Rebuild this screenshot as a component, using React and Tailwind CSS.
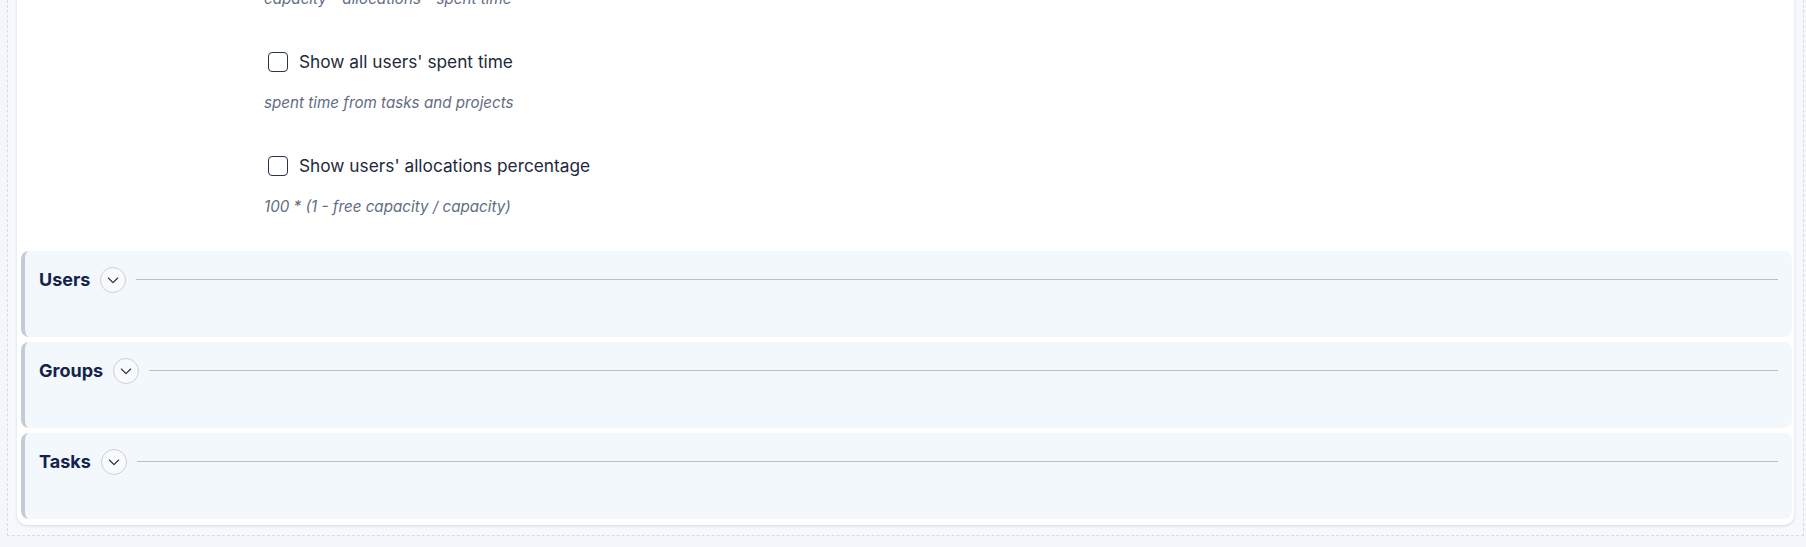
import { useState } from "react";

const options = [
  { id: "remaining", label: "Show users' remaining capacity", hint: "capacity - allocations - spent time" },
  { id: "spent", label: "Show all users' spent time", hint: "spent time from tasks and projects" },
  { id: "percent", label: "Show users' allocations percentage", hint: "100 * (1 - free capacity / capacity)" },
];

const sections = ["Users", "Groups", "Tasks"];

const Chevron = () => (
  <svg width="16" height="16" viewBox="0 0 24 24" fill="none" stroke="#1e293b" strokeWidth="1.6" strokeLinecap="round" strokeLinejoin="round">
    <path d="M5 9l7 7 7-7" />
  </svg>
);

const App = () => {
  const [checked, setChecked] = useState({});
  const [open, setOpen] = useState({});

  return (
    <div className="min-h-screen overflow-hidden bg-[#f3f7fb]" style={{ fontFamily: "Inter, 'Noto Sans', sans-serif" }}>
      <div className="-mt-[40px] ml-[7px] mr-[2px] border border-dashed border-[#d3dde8] bg-[#f5f9fc] px-[9px] pt-[9px] pb-[10px]">
        <div className="rounded-[10px] bg-white pl-[4px] pr-[2px] pb-[6px] shadow-[0_1px_3px_rgba(15,23,42,0.14)]">
          {/* Settings */}
          <div className="pl-[243px] pt-[78px] pb-[32px]">
            {options.map((o, i) => (
              <div key={o.id} className={i === 0 ? "-mt-[104px]" : "mt-[37px]"}>
                <label className={"flex h-[28px] items-center gap-[11px] pl-[4px] " + (i === 0 ? "invisible" : "")}>
                  <button
                    onClick={() => setChecked({ ...checked, [o.id]: !checked[o.id] })}
                    className="h-[20px] w-[20px] rounded-[4px] border-[1.5px] border-[#273449] bg-white"
                  />
                  <span className="text-[17.3px] text-[#1e293b]">{o.label}</span>
                </label>
                <p className="mt-[15px] h-[24px] text-[15.2px] leading-[24px] italic text-[#5f6d82]">{o.hint}</p>
              </div>
            ))}
          </div>

          {/* Sections */}
          <div className="flex flex-col gap-[5px]">
            {sections.map((s) => (
              <section key={s} className="h-[86px] rounded-[8px] border-l-[4px] border-[#c3ccd5] bg-[#f3f8fd]">
                <div className="flex items-center pt-[15px] pl-[14px] pr-[14px]">
                  <h3 className="text-[18px] font-bold text-[#14234a]">{s}</h3>
                  <button
                    onClick={() => setOpen({ ...open, [s]: !open[s] })}
                    className="ml-[10px] flex h-[26px] w-[26px] items-center justify-center rounded-full border border-[#c9d1db] bg-[#f8fafc]"
                  >
                    <Chevron />
                  </button>
                  <div className="ml-[10px] h-px flex-1 bg-[#b5c3d1]" />
                </div>
              </section>
            ))}
          </div>
        </div>
      </div>
    </div>
  );
};

export default App;
